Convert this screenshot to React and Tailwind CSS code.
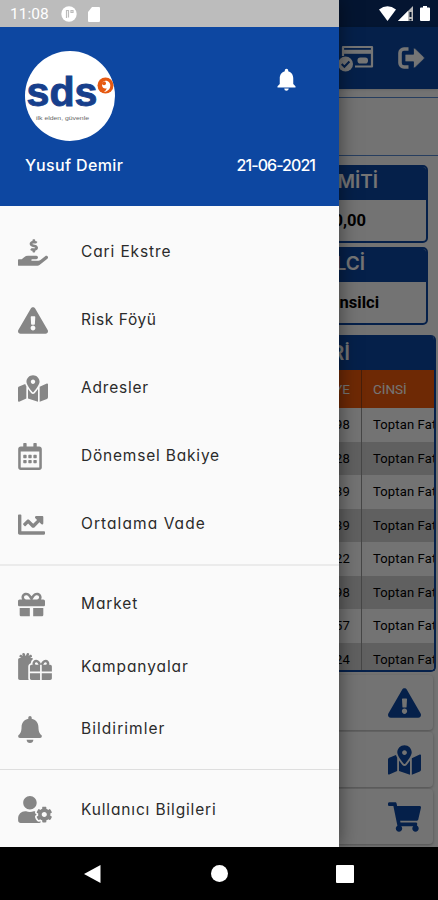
import React from "react";
import {
  FaBell,
  FaChartLine,
  FaExclamationTriangle,
  FaGift,
  FaGifts,
  FaHandHoldingUsd,
  FaMapMarkedAlt,
  FaRegCalendarAlt,
  FaShoppingCart,
  FaUserCog,
} from "react-icons/fa";
import { MdNotifications } from "react-icons/md";

const accountItems = [
  { title: "Cari Ekstre", icon: FaHandHoldingUsd, width: "w-[30px]", tracking: "tracking-[0.88px]" },
  { title: "Risk Föyü", icon: FaExclamationTriangle, width: "w-[30px]", tracking: "tracking-[0.6px]" },
  { title: "Adresler", icon: FaMapMarkedAlt, width: "w-[30px]", tracking: "tracking-[0.8px]" },
  { title: "Dönemsel Bakiye", icon: FaRegCalendarAlt, width: "w-[24px]", tracking: "tracking-[0.8px]" },
  { title: "Ortalama Vade", icon: FaChartLine, width: "w-[27px]", tracking: "tracking-[1.07px]" },
];

const marketItems = [
  { title: "Market", icon: FaGift, width: "w-[27px]", tracking: "tracking-[0.9px]" },
  { title: "Kampanyalar", icon: FaGifts, width: "w-[34px]", tracking: "tracking-[0.9px]" },
  { title: "Bildirimler", icon: FaBell, width: "w-[24px]", tracking: "tracking-[1.05px]" },
];

const rows = ["98", "28", "39", "39", "22", "98", "57", "24"];

const shortcuts = [FaExclamationTriangle, FaMapMarkedAlt, FaShoppingCart];

const MenuItem = ({ item, height }) => {
  const Icon = item.icon;
  return (
    <div className={`flex items-center pl-[18px] ${height}`}>
      <div className="w-[63px] shrink-0 text-[#868686]">
        <Icon className={`h-[27px] ${item.width}`} />
      </div>
      <span className={`whitespace-nowrap text-[15.5px] leading-5 text-[#2b2b2b] ${item.tracking}`}>
        {item.title}
      </span>
    </div>
  );
};

const Logo = () => (
  <svg viewBox="0 0 90 90" className="h-[90px] w-[90px]">
    <circle cx="45" cy="45" r="45" fill="#fff" />
    <text x="1.500" y="54.500" fontFamily="Liberation Sans, sans-serif" fontWeight="700" fontSize="40" textLength="71" lengthAdjust="spacingAndGlyphs" fill="#173f8c" stroke="#173f8c" strokeWidth="0.900">
      sds
    </text>
    <circle cx="80.500" cy="34.500" r="8" fill="#e65a12" />
    <path d="M78.500 30.200c2.600-1.500 6.800.1 6.800 4.200 0 3.400-2.500 6-6.300 6.500 1.600-1.200 2.500-2.400 2.600-3.700-2.200.7-4.300-.3-4.500-2.700-.1-1.800.2-3.300 1.400-4.300Z" fill="#fff" />
    <circle cx="79" cy="32.300" r="2" fill="#e65a12" />
    <text x="11" y="69" fontFamily="Liberation Sans, sans-serif" fontSize="6" textLength="53" lengthAdjust="spacingAndGlyphs" fill="#666">
      ilk elden, güvenle
    </text>
  </svg>
);

const CardCheckIcon = () => (
  <svg viewBox="0 0 36 28" className="h-7 w-9" fill="none">
    <path d="M5 12V3h29v19.500H17" stroke="#fff" strokeWidth="2.200" strokeLinejoin="round" />
    <path d="M5 7.800h29" stroke="#fff" strokeWidth="4" />
    <rect x="19.500" y="13.500" width="10.500" height="6" rx="2.800" fill="#fff" />
    <circle cx="7.500" cy="20" r="7.500" fill="#fff" />
    <path d="m3.700 20 2.700 2.800 5-5.300" stroke="#0d47a1" strokeWidth="2" />
  </svg>
);

const LogoutIcon = () => (
  <svg viewBox="0 0 27 22" className="h-[22px] w-[27px]" fill="none">
    <path d="M10.500 2H6a4 4 0 0 0-4 4v10a4 4 0 0 0 4 4h4.500" stroke="#fff" strokeWidth="3.600" />
    <path d="M8 7.200h7.500V2.300c0-1 1-1.400 1.700-.7l8.800 8.500a1.200 1.200 0 0 1 0 1.800l-8.800 8.500c-.7.700-1.700.3-1.700-.7v-4.900H8a1 1 0 0 1-1-1V8.200a1 1 0 0 1 1-1Z" fill="#fff" stroke="#0d47a1" strokeWidth="0.800" />
  </svg>
);

const SummaryCard = ({ title, value, titlePad, valuePad }) => (
  <div className="mr-[10px] h-[78px] overflow-hidden rounded-[5px] border-2 border-[#0d47a1]">
    <div className={`flex h-[33px] items-center justify-end bg-[#0d47a1] pb-[2px] text-[19px] font-semibold text-white ${titlePad}`}>
      {title}
    </div>
    <div className={`flex h-[41px] items-center justify-end pt-[2px] font-[Roboto,sans-serif] text-[16.5px] font-bold text-black ${valuePad}`}>
      {value}
    </div>
  </div>
);

const Dashboard = () => (
  <div className="ml-[300px] flex h-[847px] w-[138px] flex-col bg-[#fafafa]">
    <div className="h-[27px] shrink-0 bg-[#092f6b]" />
    <div className="flex h-[62px] shrink-0 items-center justify-end gap-[24px] bg-[#0d47a1] pr-[13px] text-white shadow">
      <CardCheckIcon />
      <LogoutIcon />
    </div>
    <div className="mt-[8px] h-[59px] shrink-0 border-y border-[#5687cf]" />
    <div className="mt-[9px] flex shrink-0 flex-col gap-1">
      <SummaryCard title="MİTİ" value="0,00" titlePad="pr-[48px]" valuePad="pr-[60px]" />
      <SummaryCard title="LCİ" value="nsilci" titlePad="pr-[61px]" valuePad="pr-[47px]" />
    </div>
    <div className="mt-[10px] mr-[2px] h-[337px] shrink-0 overflow-hidden rounded-[5px] border-2 border-t-0 border-[#0d47a1] font-[Roboto,sans-serif]">
      <div className="flex h-[35px] items-center justify-end bg-[#0d47a1] pr-[84px] text-[20px] font-semibold text-white">Rİ</div>
      <div className="flex h-[38px] items-center bg-[#f05a0c] text-[13.5px] text-white">
        <span className="flex h-full w-[60px] items-center justify-end border-r border-[#9c4418] pr-[11px]">YE</span>
        <span className="pl-[11px]">CİNSİ</span>
      </div>
      {rows.map((value, index) => (
        <div
          key={index}
          className={`flex h-[33.5px] items-center text-[13px] tracking-[0.15px] text-black ${index % 2 ? "bg-[#d2d2d2]" : "bg-[#fafafa]"}`}
        >
          <span className="flex h-full w-[60px] shrink-0 items-center justify-end border-r border-[#9a9a9a] pr-[11px]">{value}</span>
          <span className="pl-[11px] whitespace-nowrap">Toptan Fat</span>
        </div>
      ))}
    </div>
    <div className="mt-[3px] flex flex-col gap-[2px]">
      {shortcuts.map((Icon, index) => (
        <div
          key={index}
          className="mr-[5px] flex h-[55px] items-center justify-end rounded-[4px] bg-[#fafafa] pr-[12px] text-[#0d47a1] shadow-[0_1px_3px_rgba(0,0,0,0.3)]"
        >
          <Icon className="h-[30px] w-[33px]" />
        </div>
      ))}
    </div>
  </div>
);

const Drawer = () => (
  <div className="absolute top-0 left-0 h-[847px] w-[339px] bg-[#fafafa] shadow-[0_0_18px_rgba(0,0,0,0.5)]">
    <div className="flex h-[27px] items-center bg-[#bcbcbc] pl-[10px] font-[Roboto,sans-serif] text-[15.5px] text-white">
      <span className="w-[51px] pt-[3px]">11:08</span>
      <svg viewBox="0 0 16 16" className="mt-px h-4 w-4">
        <circle cx="8" cy="8" r="7.700" fill="#fff" />
        <path d="M5.500 4v8M5.500 4.500h2v7M10 4.500h2v2H10Z" fill="none" stroke="#bcbcbc" strokeWidth="1.200" />
      </svg>
      <svg viewBox="0 0 12 15" className="mt-px ml-[11px] h-[15px] w-3">
        <path d="M4 0h7a1 1 0 0 1 1 1v13a1 1 0 0 1-1 1H1a1 1 0 0 1-1-1V5Z" fill="#fff" />
      </svg>
    </div>
    <div className="flex h-[179px] flex-col bg-[#0d47a1] px-[25px] pt-[24px] text-white">
      <div className="flex items-start justify-between">
        <Logo />
        <MdNotifications className="mt-[15px] mr-[14px] h-[27px] w-[27px]" />
      </div>
      <div className="mt-[12px] flex justify-between text-[16px] leading-6 font-medium">
        <span className="tracking-[0.38px]">Yusuf Demir</span>
        <span className="mr-[-1px] tracking-[-0.95px]">21-06-2021</span>
      </div>
    </div>
    <div className="pt-[12px]">
      {accountItems.map((item) => (
        <MenuItem key={item.title} item={item} height="h-[68px]" />
      ))}
    </div>
    <div className="mt-[6px] h-[2px] bg-[#ebebeb]" />
    <div className="pt-[7px]">
      {marketItems.map((item) => (
        <MenuItem key={item.title} item={item} height="h-[62.5px]" />
      ))}
    </div>
    <div className="mt-[8px] h-px bg-[#dedede]" />
    <div className="pt-[9px]">
      <MenuItem
        item={{ title: "Kullanıcı Bilgileri", icon: FaUserCog, width: "w-[34px]", tracking: "tracking-[0.85px]" }}
        height="h-[62px]"
      />
    </div>
  </div>
);

const NavigationBar = () => (
  <div className="flex h-[53px] items-center bg-black pl-[83px]">
    <svg viewBox="0 0 18 20" className="h-5 w-[18px]">
      <path d="M17.500 1v18L1 10Z" fill="#fff" />
    </svg>
    <div className="ml-[110px] h-[17px] w-[17px] rounded-full bg-white" />
    <div className="ml-[108px] h-[18px] w-[18px] rounded-[1px] bg-white" />
  </div>
);

const App = () => (
  <div className="relative h-[900px] w-[438px] overflow-hidden bg-black font-[Inter,sans-serif] [font-feature-settings:'cv11']">
    <Dashboard />
    <div className="absolute top-0 left-0 h-[847px] w-[438px] bg-black/54" />
    <Drawer />
    <div className="absolute top-[6px] right-[8px] flex items-center gap-[2px]">
      <svg viewBox="0 0 17 15" className="h-[15px] w-[17px]">
        <path d="M0 3.500Q8.500-3 17 3.500L8.500 15Z" fill="#fff" />
      </svg>
      <svg viewBox="0 0 16 15" className="h-[15px] w-4">
        <path d="M15 0v15H0Z" fill="#bbb" />
        <path d="M10 5v10H0Z" fill="#fff" />
        <path d="M12.500 6v5M12.500 13v1.500" stroke="#06172e" strokeWidth="2" />
      </svg>
      <svg viewBox="0 0 10 15" className="ml-1 h-[15px] w-[10px]">
        <path d="M3 0h4v1.500h2a1 1 0 0 1 1 1V14a1 1 0 0 1-1 1H1a1 1 0 0 1-1-1V2.500a1 1 0 0 1 1-1h2Z" fill="#fff" />
      </svg>
    </div>
    <NavigationBar />
  </div>
);

export default App;
